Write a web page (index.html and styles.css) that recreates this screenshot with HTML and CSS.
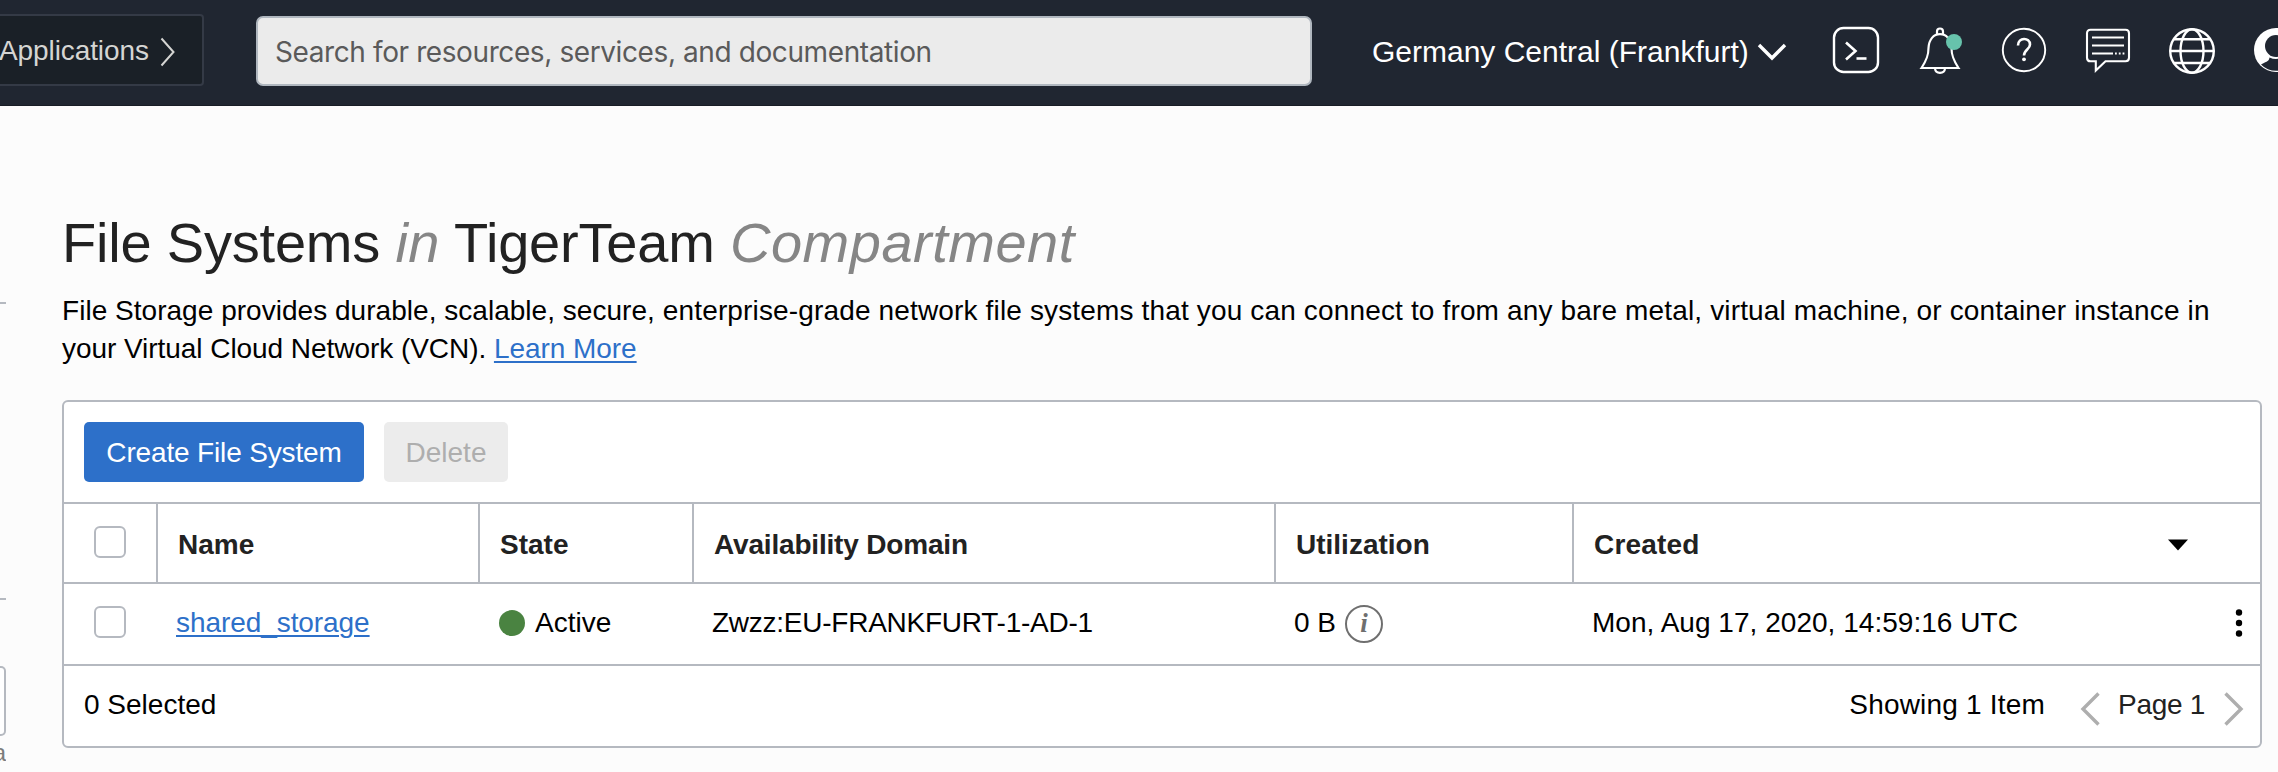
FILE: index.html
```html
<!DOCTYPE html>
<html lang="en">
<head>
<meta charset="utf-8">
<title>File Systems</title>
<link rel="stylesheet" href="styles.css">
</head>
<body>
<header class="topbar">
  <div class="apps"><span class="apps-label">Applications</span>
    <svg class="apps-arrow" width="16" height="30" viewBox="0 0 16 30"><path d="M1.5 1.5L13.5 15L1.5 28.5" fill="none" stroke="#d5d5d3" stroke-width="2"/></svg>
  </div>
  <div class="search"><span class="search-text">Search for resources, services, and documentation</span></div>
  <div class="region"><span>Germany Central (Frankfurt)</span>
    <svg class="region-arrow" width="30" height="18" viewBox="0 0 30 18"><path d="M2 2L15 15L28 2" fill="none" stroke="#fff" stroke-width="3.400"/></svg>
  </div>
  <nav class="icons">
    <svg class="icon" width="48" height="48" viewBox="0 0 48 48"><g fill="none" stroke="#fff"><rect x="2" y="2" width="44" height="44" rx="9.5" stroke-width="2.400"/><path d="M14 16.5L23.5 25L14 33.5" stroke-width="2.600"/><path d="M24.5 32.5H34.5" stroke-width="2.600"/></g></svg>
    <svg class="icon" width="48" height="48" viewBox="0 0 48 48"><g fill="none" stroke="#fff" stroke-width="2.200"><path d="M5.500 42H42.500C37 33.500 35.500 29 35.500 22C35 13.500 30.500 8.200 24 8.200S13 13.500 12.500 22C12.500 29 11 33.500 5.500 42Z"/><path d="M21 8.500V5.500C21 1.500 27 1.500 27 5.500V8.500"/><path d="M19 42.500C19.500 48.200 28.500 48.200 29 42.500"/></g><circle cx="38" cy="16" r="8" fill="#67c3ac"/></svg>
    <svg class="icon" width="48" height="48" viewBox="0 0 48 48"><g fill="none" stroke="#fff"><circle cx="24" cy="24" r="21.200" stroke-width="1.900"/><path d="M18 19.500C18 11 30 11 30 18.500C30 23.500 24 23.500 24 29.500" stroke-width="2.600"/></g><circle cx="24" cy="33.300" r="1.900" fill="#fff"/></svg>
    <svg class="icon" width="48" height="48" viewBox="0 0 48 48"><g fill="none" stroke="#fff" stroke-width="2.100"><path d="M6.500 3.800H41.500Q45 3.800 45 7.300V31.800Q45 35.300 41.500 35.300H21.500L11.800 44.500V35.300H6.500Q3 35.300 3 31.800V7.300Q3 3.800 6.500 3.800Z"/><path d="M8 11.500H40M8 19.500H40M8 27.500H29M31 27.500H32.800M34.800 27.500H36.600M38.600 27.500H40.400"/></g></svg>
    <svg class="icon" width="48" height="48" viewBox="0 0 48 48"><g fill="none" stroke="#fff" stroke-width="2.400"><circle cx="24" cy="25" r="21.800"/><ellipse cx="24" cy="25" rx="11.500" ry="21.800"/><path d="M6 13.300H42M2 25H46M6 37H42"/></g></svg>
    <svg class="icon" width="48" height="48" viewBox="0 0 48 48"><circle cx="24" cy="24" r="22" fill="#fff"/><circle cx="24" cy="20" r="11" fill="#202631"/><path d="M9 38.500C13 36 17 36 17.500 31.500Q24 34.500 30.500 31.500C31 36 35 36 39 38.500A21 21 0 0 1 9 38.500Z" fill="#202631"/></svg>
  </nav>
</header>
<div class="page">
  <aside class="side">
    <div class="side-top"></div>
    <div class="side-mid"></div>
    <div class="side-input"></div>
    <div class="side-note">a</div>
  </aside>
  <main class="content">
    <h1 class="title">File Systems <em class="muted in">in</em> TigerTeam <em class="muted comp">Compartment</em></h1>
    <p class="intro"><span class="snug">File Storage provides durable, scalable, secure,</span> enterprise-grade network file systems that you can connect to from any bare metal, virtual machine, or container instance in<br><span class="tight">your Virtual Cloud Network (VCN). <a class="link" href="#">Learn More</a></span></p>
    <section class="panel">
      <div class="toolbar"><button class="btn primary">Create File System</button><button class="btn disabled">Delete</button></div>
      <div class="row head">
        <div class="cell check"><span class="box"></span></div>
        <div class="cell">Name</div>
        <div class="cell">State</div>
        <div class="cell heading-domain">Availability Domain</div>
        <div class="cell">Utilization</div>
        <div class="cell created"><span>Created</span><svg width="20" height="12" viewBox="0 0 20 12"><path d="M0 .5H20L10 11.500Z" fill="#000"/></svg></div>
      </div>
      <div class="row data">
        <div class="cell check"><span class="box"></span></div>
        <div class="cell name"><a class="link" href="#">shared_storage</a></div>
        <div class="cell state"><span class="dot"></span><span>Active</span></div>
        <div class="cell domain">Zwzz:EU-FRANKFURT-1-AD-1</div>
        <div class="cell usage"><span>0 B</span><span class="info">i</span></div>
        <div class="cell date"><span>Mon, Aug 17, 2020, 14:59:16 UTC</span><svg width="8" height="30" viewBox="0 0 8 30"><circle cx="4" cy="4.500" r="3.200"/><circle cx="4" cy="15" r="3.200"/><circle cx="4" cy="25.500" r="3.200"/></svg></div>
      </div>
      <div class="footer">
        <span>0 Selected</span>
        <div class="pager">
          <span class="showing">Showing 1 Item</span>
          <svg class="arrow" width="20" height="34" viewBox="0 0 20 34"><path d="M18.500 1.500L3 17L18.500 32.500" fill="none" stroke="#aeaeae" stroke-width="3.400"/></svg>
          <span class="page-no">Page 1</span>
          <svg class="arrow" width="20" height="34" viewBox="0 0 20 34"><path d="M1.500 1.500L17 17L1.500 32.500" fill="none" stroke="#aeaeae" stroke-width="3.400"/></svg>
        </div>
      </div>
    </section>
  </main>
</div>
</body>
</html>
```
FILE: styles.css
```css
* { box-sizing: border-box; }
body {
  margin: 0;
  height: 772px;
  overflow: hidden;
  background: #fcfcfc;
  color: #000;
  font: 28px/38px "Liberation Sans", Arial, sans-serif;
}
svg { display: block; flex: none; }

.topbar {
  display: flex;
  align-items: flex-start;
  height: 106px;
  background: #202631;
  border-bottom: 1px solid #181d26;
  overflow: hidden;
}
.apps {
  flex: none;
  display: flex;
  align-items: center;
  width: 204px;
  height: 72px;
  margin-top: 14px;
  border: 2px solid #343a46;
  border-left: 0;
  border-radius: 0 4px 4px 0;
  background: #1a2027;
  color: #d5d5d3;
}
.apps-label { width: 160px; margin: 1px 0 0 -1px; letter-spacing: -0.1px; }
.apps-arrow { margin: 4px 0 0 1px; }
.search {
  flex: none;
  display: flex;
  align-items: center;
  width: 1056px;
  height: 70px;
  margin: 16px 0 0 52px;
  padding: 2px 0 0 17px;
  border: 2px solid #b0b7bf;
  border-radius: 7px;
  background: #ebebeb;
  color: #5a5a5a;
  font-family: Inter, sans-serif;
  white-space: nowrap;
}
.search-text { letter-spacing: -0.4px; }
.region {
  flex: none;
  display: flex;
  align-items: center;
  height: 103px;
  width: 461px;
  padding-left: 60px;
  color: #fff;
  font-size: 30px;
  white-space: nowrap;
}
.region-arrow { margin-left: 8px; }
.icons { flex: none; display: flex; gap: 36px; padding: 26px 0 0 59px; }

.page { display: flex; height: 666px; }
.side { width: 62px; flex: none; padding-top: 196px; }
.side-top, .side-mid { width: 6px; height: 2px; background: #b5b9c0; }
.side-mid { margin-top: 294px; }
.side-input {
  width: 6px;
  height: 70px;
  margin-top: 66px;
  border: 2px solid #b5b9c0;
  border-left: 0;
  border-radius: 0 5px 5px 0;
  background: #fff;
}
.side-note {
  display: flex;
  justify-content: flex-end;
  width: 6px;
  overflow: hidden;
  font-size: 24px;
  line-height: 34px;
  color: #7c7c7c;
}

.content { width: 2200px; padding-top: 104px; }
.title {
  margin: 0;
  color: #222;
  font-size: 56px;
  font-weight: 400;
  line-height: 66px;
  letter-spacing: -0.2px;
  white-space: nowrap;
}
.muted { color: #868686; }
.in { letter-spacing: 0.3px; }
.comp { letter-spacing: 0.5px; }
.intro { margin: 16px 0 0; letter-spacing: 0.15px; white-space: nowrap; }
.snug { letter-spacing: 0.03px; }
.tight { letter-spacing: -0.05px; }
.link {
  color: #2d70c9;
  text-decoration: underline;
  text-decoration-thickness: 2px;
  text-underline-offset: 3px;
}

.panel {
  margin-top: 32px;
  height: 348px;
  border: 2px solid #b5b9c0;
  border-radius: 6px;
  background: #fff;
}
.toolbar { display: flex; gap: 20px; height: 100px; padding: 20px; }
.btn {
  height: 60px;
  padding: 1px 0 0;
  border: 0;
  border-radius: 5px;
  font: inherit;
}
.primary { width: 280px; background: #2d70c9; color: #fff; letter-spacing: -0.15px; }
.disabled { width: 124px; background: #ececec; color: #aeaeae; }
.row {
  display: grid;
  grid-template-columns: 92px 322px 214px 582px 298px 1fr;
  height: 82px;
  border-bottom: 2px solid #b5b9c0;
}
.head { border-top: 2px solid #b5b9c0; color: #222; font-weight: 700; }
.cell { display: flex; align-items: center; padding: 3px 0 0 20px; white-space: nowrap; }
.head .cell + .cell { border-left: 2px solid #b5b9c0; }
.data .cell { padding: 0 0 3px 20px; }
.row .check { padding: 0 0 2px 30px; }
.box { width: 32px; height: 32px; border: 2px solid #b5b9c0; border-radius: 6px; background: #fff; }
.data .check { padding-bottom: 4px; }
.heading-domain { letter-spacing: -0.18px; }
.created { justify-content: space-between; letter-spacing: 0.2px; }
.head .created { padding-right: 72px; }
.name { letter-spacing: -0.07px; }
.state { gap: 10px; }
.dot { width: 26px; height: 26px; margin-left: 1px; border-radius: 50%; background: #4a8341; }
.domain { letter-spacing: -0.25px; }
.usage { gap: 9px; }
.info {
  width: 38px;
  height: 38px;
  margin-top: 3px;
  border: 2px solid #6f6f6f;
  border-radius: 50%;
  color: #6f6f6f;
  font: italic 700 27px/33px "Liberation Serif", serif;
  text-align: center;
}
.date { justify-content: space-between; letter-spacing: 0.03px; }
.data .date { padding-right: 17px; }
.footer { display: flex; justify-content: space-between; height: 80px; padding: 20px 16px 0 20px; }
.pager { display: flex; }
.showing { letter-spacing: 0.2px; }
.arrow { margin-top: 6px; }
.showing + .arrow { margin-left: 35px; }
.page-no { margin: 0 19px 0 18px; color: #222; letter-spacing: -0.3px; }
```
